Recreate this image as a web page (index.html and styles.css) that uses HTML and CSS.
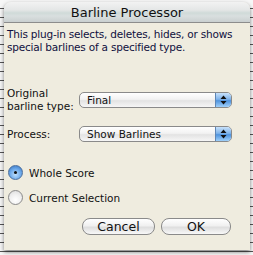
FILE: index.html
```html
<!DOCTYPE html>
<html lang="en">
<head>
  <meta charset="UTF-8" />
  <title>Barline Processor</title>
  <link rel="stylesheet" href="styles.css">
</head>
<body>

<div class="window">
  <div class="titlebar">Barline Processor</div>
  <div class="content">
    <p class="intro">This plug-in selects, deletes, hides, or shows special barlines of a specified type.</p>

    <div class="row first">
      <label class="label">Original<br>barline type:</label>
      <div class="popup">
        <span class="value">Final</span>
        <span class="arrows"><svg width="7" height="10" viewBox="0 0 7 10"><path d="M3.5 0.5 L6.5 4 L0.5 4 Z M0.5 6 L6.5 6 L3.5 9.5 Z" fill="#111"/></svg></span>
      </div>
    </div>

    <div class="row">
      <label class="label">Process:</label>
      <div class="popup">
        <span class="value">Show Barlines</span>
        <span class="arrows"><svg width="7" height="10" viewBox="0 0 7 10"><path d="M3.5 0.5 L6.5 4 L0.5 4 Z M0.5 6 L6.5 6 L3.5 9.5 Z" fill="#111"/></svg></span>
      </div>
    </div>

    <div class="radios">
      <div class="radio on"><span class="dot"></span>Whole Score</div>
      <div class="radio"><span class="dot"></span>Current Selection</div>
    </div>

    <div class="buttons">
      <button class="btn">Cancel</button>
      <button class="btn">OK</button>
    </div>
  </div>
</div>

</body>
</html>
```

FILE: styles.css
```css
body {
  margin: 0;
  width: 253px;
  height: 255px;
  overflow: hidden;
  font-family: "DejaVu Sans", sans-serif;
  background: #f4f4f4 repeating-linear-gradient(to bottom, #f7f7f7 0, #f7f7f7 8px, #555 8px, #555 9px);
}
.window {
  margin: 2px 3px 0 4px;
  width: 246px;
  height: 248px;
  background: #efecdf;
  border-radius: 7px 7px 0 0;
  box-shadow: 0 2px 4px rgba(0,0,0,0.5);
  overflow: hidden;
}
.titlebar {
  height: 20px;
  line-height: 21px;
  text-align: center;
  font-size: 13px;
  color: #111;
  background: linear-gradient(to bottom, #f2f2f2 0, #e4e6e6 40%, #cfdad8 55%, #d9dfdf 70%, #c9cfd0 100%);
  border-bottom: 1px solid #8c8c8c;
}
.content {
  padding: 0 3px;
  font-size: 10.5px;
  color: #111;
}
.intro {
  margin: 5px 0 0 0;
  line-height: 13px;
  color: #101040;
  letter-spacing: -0.2px;
}
.row {
  display: flex;
  align-items: center;
  margin-top: 13px;
}
.row.first {
  margin-top: 33px;
}
.label {
  width: 72px;
  line-height: 13px;
}
.popup {
  display: flex;
  align-items: center;
  width: 151px;
  height: 14px;
  border: 1px solid #8a8a8a;
  border-radius: 5px;
  background: linear-gradient(to bottom, #ffffff 0, #f2f2f2 45%, #e3e3e3 55%, #f6f6f6 100%);
  overflow: hidden;
}
.popup .value {
  flex: 1;
  padding-left: 7px;
}
.arrows {
  width: 15px;
  height: 14px;
  display: flex;
  align-items: center;
  justify-content: center;
  border-left: 1px solid #5d86b6;
  background: linear-gradient(to bottom, #c8e2fb 0, #7fb3ea 45%, #4f93dd 55%, #9fd0fa 100%);
}
.radios {
  margin-top: 23px;
  padding-left: 1px;
}
.radio {
  display: flex;
  align-items: center;
  height: 15px;
  margin-bottom: 10px;
}
.radio .dot {
  width: 13px;
  height: 13px;
  border-radius: 50%;
  margin-right: 6px;
  border: 1px solid #8a8a8a;
  background: radial-gradient(circle at 50% 70%, #ffffff 0, #f0f0f0 50%, #d8d8d8 100%);
  position: relative;
}
.radio.on .dot {
  border-color: #4c6f9c;
  background: radial-gradient(circle at 50% 65%, #bfe0fd 0, #6eaaea 50%, #2f6fc0 100%);
}
.radio.on .dot::after {
  content: "";
  position: absolute;
  left: 5px;
  top: 5px;
  width: 3px;
  height: 3px;
  border-radius: 50%;
  background: #111;
}
.buttons {
  display: flex;
  justify-content: flex-end;
  gap: 6px;
  margin-top: 13px;
  padding-right: 16px;
}
.btn {
  height: 17px;
  padding: 0;
  font-family: "DejaVu Sans", sans-serif;
  font-size: 12.5px;
  color: #111;
  border: 1px solid #8a8a8a;
  border-radius: 8px;
  background: linear-gradient(to bottom, #ffffff 0, #f0f0f0 45%, #dedede 55%, #f8f8f8 100%);
}
.btn:first-child {
  width: 73px;
}
.btn:last-child {
  width: 70px;
}
```
